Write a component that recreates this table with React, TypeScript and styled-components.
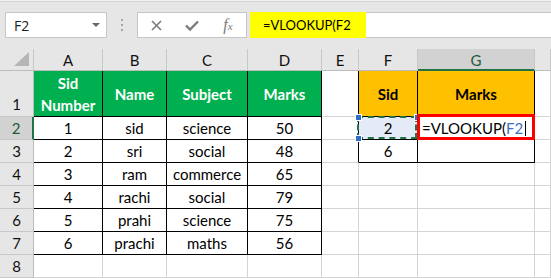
import React from 'react';
import styled, { createGlobalStyle } from 'styled-components';

const GlobalStyle = createGlobalStyle`
  html, body {
    margin: 0;
    padding: 0;
    background: #ffffff;
    overflow: hidden;
  }
  body {
    font-family: Lato, "Open Sans", sans-serif;
  }
`;

const COLUMNS = [
  { key: 'A', label: 'A', width: 69 },
  { key: 'B', label: 'B', width: 64 },
  { key: 'C', label: 'C', width: 81 },
  { key: 'D', label: 'D', width: 74 },
  { key: 'E', label: 'E', width: 37 },
  { key: 'F', label: 'F', width: 59 },
  { key: 'G', label: 'G', width: 117 },
  { key: 'H', label: '', width: 16 },
];

const HEADERS: Record<number, { text: string; fill: string; ink: string }> = {
  0: { text: 'Sid\nNumber', fill: '#00b050', ink: '#ffffff' },
  1: { text: 'Name', fill: '#00b050', ink: '#ffffff' },
  2: { text: 'Subject', fill: '#00b050', ink: '#ffffff' },
  3: { text: 'Marks', fill: '#00b050', ink: '#ffffff' },
  5: { text: 'Sid', fill: '#ffc000', ink: '#000000' },
  6: { text: 'Marks', fill: '#ffc000', ink: '#000000' },
};

const DATA: string[][] = [
  ['1', 'sid', 'science', '50', '', '2', '', ''],
  ['2', 'sri', 'social', '48', '', '6', '', ''],
  ['3', 'ram', 'commerce', '65', '', '', '', ''],
  ['4', 'rachi', 'social', '79', '', '', '', ''],
  ['5', 'prahi', 'science', '75', '', '', '', ''],
  ['6', 'prachi', 'maths', '56', '', '', '', ''],
  ['', '', '', '', '', '', '', ''],
];

// two bordered tables: A1:D7 and F1:G3
const boxed = (r: number, c: number) =>
  (r >= 1 && r <= 7 && c >= 0 && c <= 3) || (r >= 1 && r <= 3 && (c === 5 || c === 6));

const GRID = '#d4d4d4';
const EDGE = '#000000';
const EXCEL_GREEN = '#217346';

const App: React.FC = () => {
  const cellBorders = (r: number, c: number) => ({
    right: boxed(r, c) || boxed(r, c + 1) ? EDGE : GRID,
    bottom: boxed(r, c) || boxed(r + 1, c) ? EDGE : GRID,
  });

  return (
    <>
      <GlobalStyle />
      <Window>
        <Toolbar>
          <NameBox>
            <span>F2</span>
            <Caret />
          </NameBox>
          <Grip>
            <Dot />
            <Dot />
            <Dot />
          </Grip>
          <FxBox>
            <FxSlot>
              <svg width="11" height="11" viewBox="0 0 11 11">
                <path d="M1 1 L10 10 M10 1 L1 10" stroke="#7a7a7a" strokeWidth="1.6" fill="none" />
              </svg>
            </FxSlot>
            <FxSlot>
              <svg width="14" height="11" viewBox="0 0 14 11">
                <path d="M1 5.5 L5 9.5 L13 1.5" stroke="#7a7a7a" strokeWidth="2.4" fill="none" />
              </svg>
            </FxSlot>
            <FxSlot>
              <FxLabel>
                f<small>x</small>
              </FxLabel>
            </FxSlot>
          </FxBox>
          <FormulaBar>
            <FormulaMark>=VLOOKUP(F2</FormulaMark>
          </FormulaBar>
        </Toolbar>

        <Sheet>
          <Corner>
            <SelectAll />
          </Corner>
          {COLUMNS.map((col) => (
            <ColHead key={col.key} $active={col.key === 'G'}>
              {col.label}
            </ColHead>
          ))}

          <RowHead $tall>1</RowHead>
          {COLUMNS.map((col, c) => {
            const head = HEADERS[c];
            const b = cellBorders(1, c);
            return (
              <Cell
                key={col.key}
                $right={b.right}
                $bottom={b.bottom}
                $fill={head?.fill}
                $ink={head?.ink}
                $bold
              >
                {head?.text}
              </Cell>
            );
          })}

          {DATA.map((row, i) => {
            const r = i + 2;
            return (
              <React.Fragment key={r}>
                <RowHead $active={r === 2}>{r}</RowHead>
                {row.map((value, c) => {
                  const b = cellBorders(r, c);
                  if (r === 2 && c === 5) {
                    return (
                      <Cell key={c} $right={b.right} $bottom={b.bottom} $fill="#e4ebf6">
                        {value}
                        <Marquee />
                        <Handle style={{ left: -4, top: -3 }} />
                        <Handle style={{ left: -4, bottom: -3 }} />
                        <Handle style={{ right: -4, top: -3 }} />
                      </Cell>
                    );
                  }
                  if (r === 2 && c === 6) {
                    return (
                      <Cell key={c} $right={b.right} $bottom={b.bottom} $left>
                        =VLOOKUP(<RefText>F2</RefText>
                        <TextCursor />
                        <EditFrame />
                      </Cell>
                    );
                  }
                  return (
                    <Cell key={c} $right={b.right} $bottom={b.bottom}>
                      {value}
                    </Cell>
                  );
                })}
              </React.Fragment>
            );
          })}
        </Sheet>
      </Window>
    </>
  );
};

const Window = styled.div`
  width: 551px;
  height: 278px;
  overflow: hidden;
  background: #e6e6e6;
`;

const Toolbar = styled.div`
  box-sizing: border-box;
  height: 49px;
  display: flex;
  align-items: flex-start;
  padding: 11px 0 0 5px;
  border-top: 1px solid #f2f2f2;
  box-shadow: inset 0 1px 0 #d2d2d2;
`;

const NameBox = styled.div`
  box-sizing: border-box;
  width: 102px;
  height: 26px;
  display: flex;
  align-items: center;
  justify-content: space-between;
  padding: 0 6px 0 8px;
  background: #ffffff;
  border: 1px solid #c6c6c6;
  font-family: "Open Sans", Lato, sans-serif;
  font-size: 14px;
  color: #222222;
`;

const Caret = styled.span`
  width: 0;
  height: 0;
  border-left: 4px solid transparent;
  border-right: 4px solid transparent;
  border-top: 4px solid #6a6a6a;
`;

const Grip = styled.div`
  width: 2px;
  height: 26px;
  margin: 0 14px;
  display: flex;
  flex-direction: column;
  justify-content: center;
  gap: 3px;
`;

const Dot = styled.span`
  width: 2px;
  height: 2px;
  background: #a4a4a4;
`;

const FxBox = styled.div`
  box-sizing: border-box;
  width: 110px;
  height: 26px;
  display: flex;
  background: #ffffff;
  border: 1px solid #c6c6c6;
`;

const FxSlot = styled.div`
  width: 37px;
  display: flex;
  align-items: center;
  justify-content: center;
`;

const FxLabel = styled.span`
  font-family: "Liberation Serif", serif;
  font-style: italic;
  font-size: 16px;
  color: #7a7a7a;

  small {
    font-size: 11px;
  }
`;

const FormulaBar = styled.div`
  box-sizing: border-box;
  flex: 1;
  height: 26px;
  margin-left: 3px;
  display: flex;
  background: #ffffff;
  border-top: 1px solid #c6c6c6;
  border-bottom: 1px solid #c6c6c6;
`;

const FormulaMark = styled.span`
  box-sizing: border-box;
  width: 116px;
  height: 26px;
  margin: -1px 0;
  padding-left: 13px;
  display: flex;
  align-items: center;
  background: #ffff00;
  font-family: Lato, sans-serif;
  font-size: 13px;
  color: #000000;
`;

const Sheet = styled.div`
  display: grid;
  grid-template-columns: 34px ${COLUMNS.map((c) => `${c.width}px`).join(' ')};
  grid-template-rows: 22px 46px repeat(7, 23px);
  background: #ffffff;
`;

const Corner = styled.div`
  box-sizing: border-box;
  display: flex;
  align-items: flex-end;
  justify-content: flex-end;
  padding: 0 4px 4px 0;
  background: #e6e6e6;
  border-right: 1px solid #c8c8c8;
  border-bottom: 1px solid #bcbcbc;
`;

const SelectAll = styled.span`
  width: 0;
  height: 0;
  border-left: 15px solid transparent;
  border-bottom: 14px solid #b6b6b6;
`;

const ColHead = styled.div<{ $active?: boolean }>`
  box-sizing: border-box;
  display: flex;
  align-items: center;
  justify-content: center;
  padding-top: 1px;
  background: ${({ $active }) => ($active ? '#d2d2d2' : '#e6e6e6')};
  border-right: 1px solid #c8c8c8;
  border-bottom: ${({ $active }) => ($active ? `2px solid ${EXCEL_GREEN}` : '1px solid #bcbcbc')};
  font-size: 15px;
  color: ${({ $active }) => ($active ? '#1e5a3a' : '#111111')};
`;

const RowHead = styled.div<{ $active?: boolean; $tall?: boolean }>`
  box-sizing: border-box;
  display: flex;
  align-items: ${({ $tall }) => ($tall ? 'flex-end' : 'center')};
  justify-content: center;
  padding-bottom: ${({ $tall }) => ($tall ? '1px' : '0')};
  background: ${({ $active }) => ($active ? '#d2d2d2' : '#e6e6e6')};
  border-right: ${({ $active }) => ($active ? `2px solid ${EXCEL_GREEN}` : '1px solid #bcbcbc')};
  border-bottom: 1px solid #c8c8c8;
  font-size: 15px;
  line-height: 22px;
  color: ${({ $active }) => ($active ? '#1e5a3a' : '#111111')};
`;

const Cell = styled.div<{
  $right: string;
  $bottom: string;
  $fill?: string;
  $ink?: string;
  $bold?: boolean;
  $left?: boolean;
}>`
  position: relative;
  box-sizing: border-box;
  display: flex;
  align-items: center;
  justify-content: ${({ $left }) => ($left ? 'flex-start' : 'center')};
  padding-left: ${({ $left }) => ($left ? '4px' : '0')};
  text-align: center;
  white-space: pre-line;
  background: ${({ $fill }) => $fill ?? '#ffffff'};
  border-right: 1px solid ${({ $right }) => $right};
  border-bottom: 1px solid ${({ $bottom }) => $bottom};
  font-size: 15px;
  line-height: 22px;
  font-weight: ${({ $bold }) => ($bold ? 700 : 400)};
  color: ${({ $ink }) => $ink ?? '#000000'};
`;

const Marquee = styled.span`
  position: absolute;
  top: -1px;
  left: -2px;
  right: 0;
  bottom: 0;
  border: 2px dashed ${EXCEL_GREEN};
  pointer-events: none;
`;

const Handle = styled.span`
  position: absolute;
  width: 5px;
  height: 5px;
  background: #2f6fc4;
  border: 1px solid #ffffff;
  z-index: 2;
`;

const RefText = styled.span`
  color: #3f6fc0;
`;

const TextCursor = styled.span`
  width: 1px;
  height: 15px;
  margin-left: 2px;
  background: #000000;
`;

const EditFrame = styled.span`
  position: absolute;
  top: -3px;
  left: -1px;
  right: -1px;
  bottom: -1px;
  border: 3px solid #ff0000;
  z-index: 3;
  pointer-events: none;
`;

export default App;
